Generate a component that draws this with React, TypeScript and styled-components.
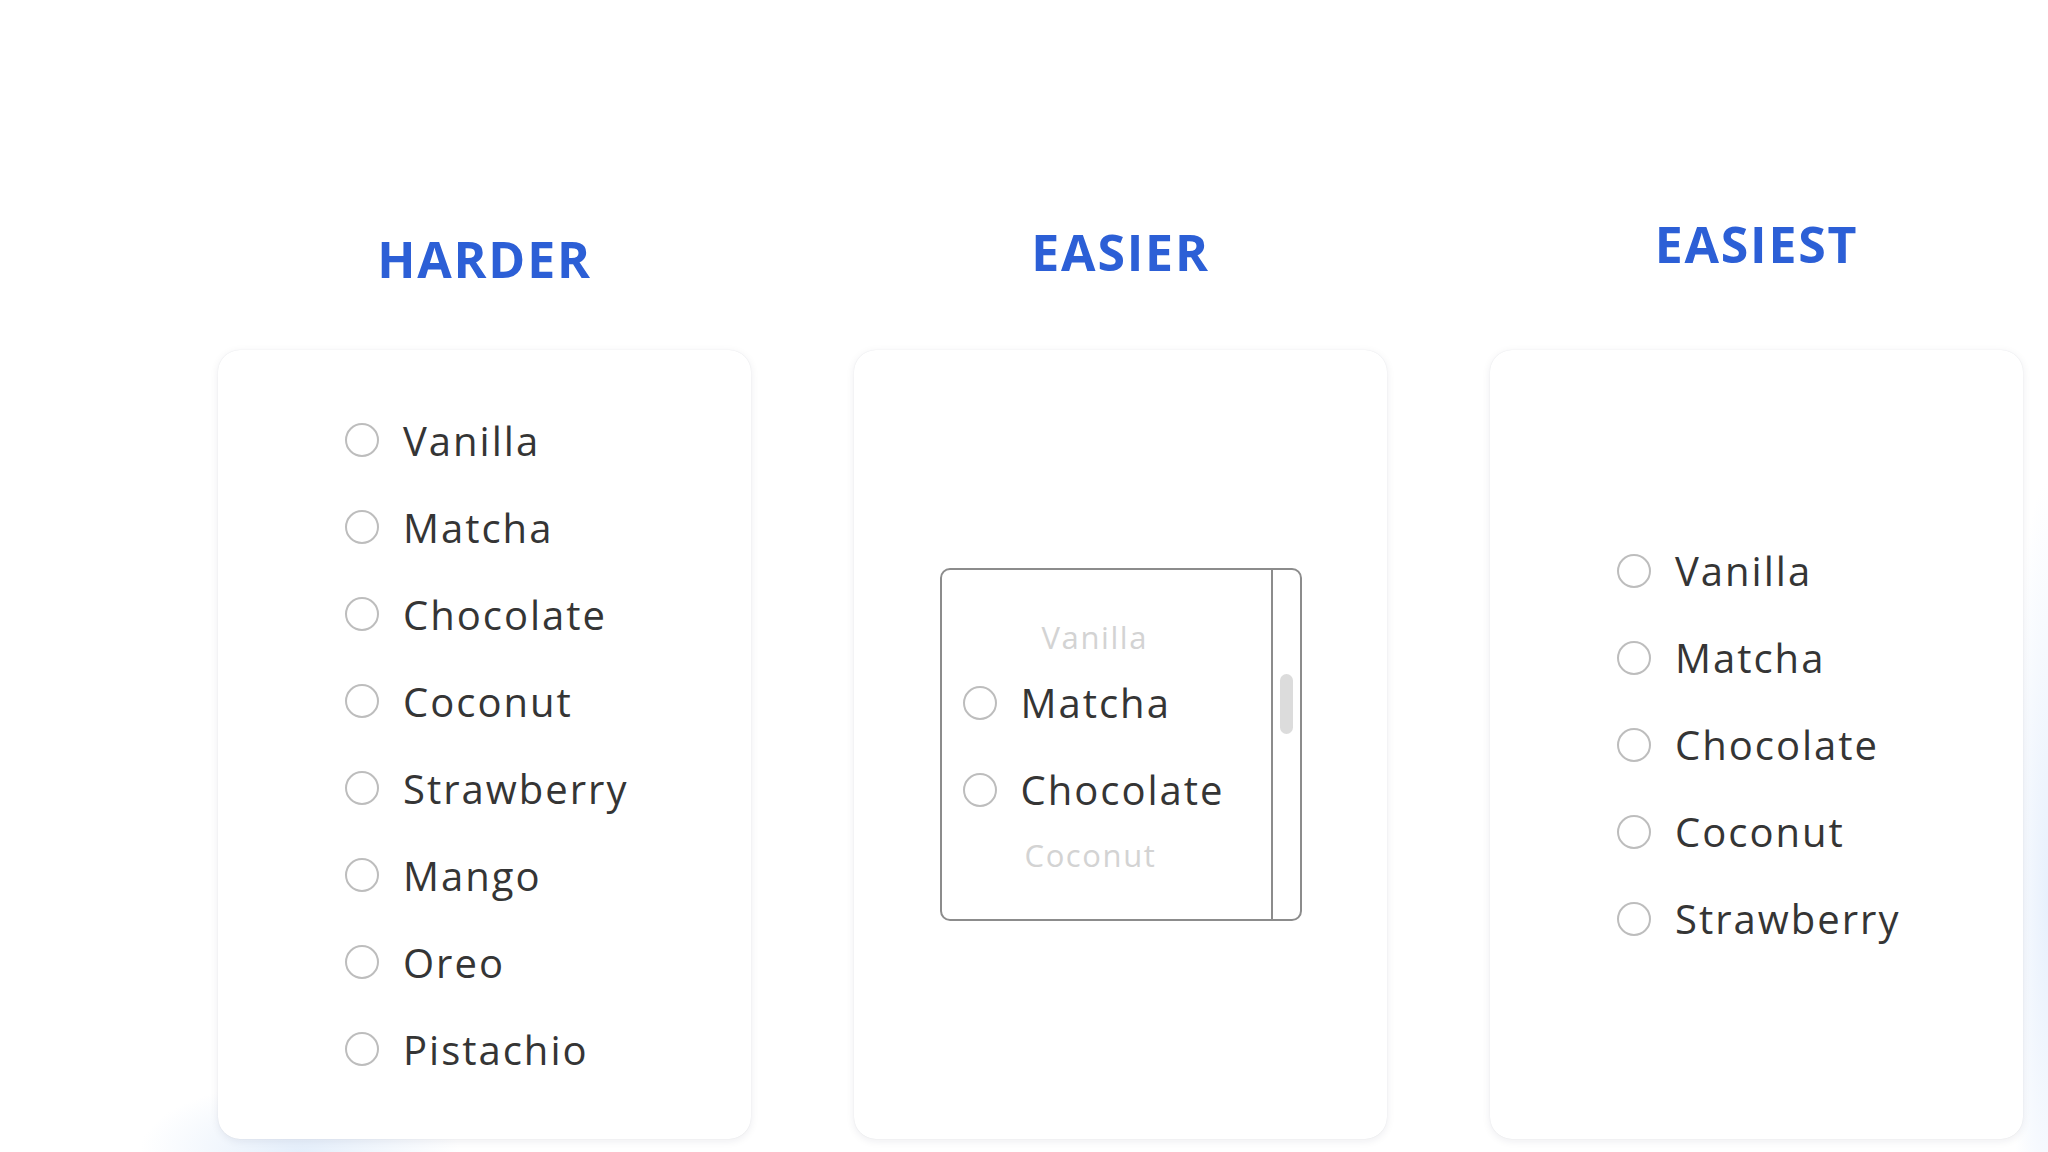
import React from 'react'
import { styled, createGlobalStyle } from 'styled-components'

const GlobalStyle = createGlobalStyle`
  html, body {
    margin: 0;
    padding: 0;
    background: #ffffff;
  }
  body {
    font-family: "Open Sans", "Noto Sans", sans-serif;
  }
`

const Page = styled.div`
  width: 2048px;
  height: 1152px;
  box-sizing: border-box;
  padding-left: 218px;
  display: flex;
  gap: 103px;
  overflow: hidden;
  background:
    radial-gradient(ellipse 160px 70px at 300px 1152px, rgba(225, 236, 250, 0.9), rgba(225, 236, 250, 0) 100%),
    radial-gradient(ellipse 40px 420px at 2048px 900px, rgba(228, 238, 252, 0.9), rgba(228, 238, 252, 0) 100%),
    #ffffff;
`

const Column = styled.section`
  width: 533px;
  display: flex;
  flex-direction: column;
`

const TitleArea = styled.div<{ $top: number }>`
  height: 350px;
  box-sizing: border-box;
  padding-top: ${p => p.$top}px;
  text-align: center;
`

const Title = styled.h2`
  margin: 0;
  font-family: "Open Sans", sans-serif;
  font-weight: 700;
  font-size: 50px;
  line-height: 60px;
  letter-spacing: 1.8px;
  color: #2c5fd6;
`

const Card = styled.div`
  height: 789px;
  background: #fff;
  border-radius: 22px;
  box-shadow: 0 2px 8px rgba(20, 30, 60, 0.08), 0 0 1px rgba(20, 30, 60, 0.12);
  display: flex;
  align-items: center;
  justify-content: center;
`

const List = styled.div`
  display: flex;
  flex-direction: column;
  width: 279px;
`

const Option = styled.label`
  height: 87px;
  display: flex;
  align-items: center;
  gap: 24px;
  font-size: 40px;
  font-weight: 500;
  letter-spacing: 2px;
  color: #353535;
  white-space: nowrap;
  cursor: pointer;
`

const Radio = styled.span`
  flex: none;
  width: 34px;
  height: 34px;
  box-sizing: border-box;
  border: 2px solid #bdbdbd;
  border-radius: 50%;
  background: #fff;
`

const Picker = styled.div`
  width: 362px;
  height: 353px;
  box-sizing: border-box;
  border: 2px solid #8c8c8c;
  border-radius: 10px;
  display: flex;
  overflow: hidden;
`

const Wheel = styled.div`
  flex: 1;
  padding: 45px 0 0 21px;
  display: flex;
  flex-direction: column;
`

const FadedOption = styled.div<{ $indent: number }>`
  height: 44px;
  display: flex;
  align-items: center;
  padding-left: ${p => p.$indent}px;
  font-size: 31px;
  font-weight: 500;
  letter-spacing: 1.6px;
  color: #d3d3d3;
`

const Track = styled.div`
  width: 27px;
  border-left: 2px solid #8c8c8c;
  display: flex;
  justify-content: center;
  padding-top: 104px;
`

const Thumb = styled.div`
  width: 13px;
  height: 60px;
  border-radius: 7px;
  background: #dcdcdc;
`

const harder = ['Vanilla', 'Matcha', 'Chocolate', 'Coconut', 'Strawberry', 'Mango', 'Oreo', 'Pistachio']
const easiest = ['Vanilla', 'Matcha', 'Chocolate', 'Coconut', 'Strawberry']

function Flavour({ name }: { name: string }) {
  return (
    <Option>
      <Radio />
      {name}
    </Option>
  )
}

export default function App() {
  return (
    <>
      <GlobalStyle />
      <Page>
        <Column>
          <TitleArea $top={229}>
            <Title>HARDER</Title>
          </TitleArea>
          <Card>
            <List>
              {harder.map(f => <Flavour key={f} name={f} />)}
            </List>
          </Card>
        </Column>

        <Column>
          <TitleArea $top={222}>
            <Title>EASIER</Title>
          </TitleArea>
          <Card>
            <Picker>
              <Wheel>
                <FadedOption $indent={79}>Vanilla</FadedOption>
                <Flavour name="Matcha" />
                <Flavour name="Chocolate" />
                <FadedOption $indent={62}>Coconut</FadedOption>
              </Wheel>
              <Track>
                <Thumb />
              </Track>
            </Picker>
          </Card>
        </Column>

        <Column>
          <TitleArea $top={214}>
            <Title>EASIEST</Title>
          </TitleArea>
          <Card>
            <List>
              {easiest.map(f => <Flavour key={f} name={f} />)}
            </List>
          </Card>
        </Column>
      </Page>
    </>
  )
}
